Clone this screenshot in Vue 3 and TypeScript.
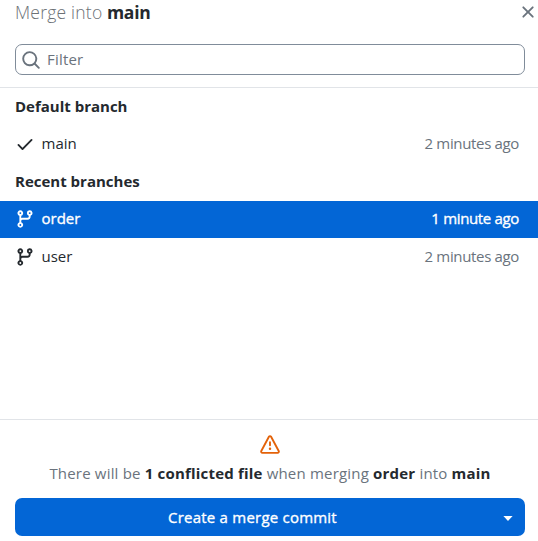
<script setup lang="ts">
import { ref } from 'vue'

interface Branch {
  name: string
  time: string
  current: boolean
}
interface BranchGroup {
  label: string
  branches: Branch[]
}

const filter = ref('')
const selected = ref('order')
const groups: BranchGroup[] = [
  { label: 'Default branch', branches: [{ name: 'main', time: '2 minutes ago', current: true }] },
  {
    label: 'Recent branches',
    branches: [
      { name: 'order', time: '1 minute ago', current: false },
      { name: 'user', time: '2 minutes ago', current: false },
    ],
  },
]

const checkPath =
  'M13.78 4.22a.75.75 0 0 1 0 1.06l-7.25 7.25a.75.75 0 0 1-1.06 0L2.22 9.28a.751.751 0 0 1 .018-1.042.751.751 0 0 1 1.042-.018L6 10.94l6.72-6.72a.75.75 0 0 1 1.06 0Z'
const branchPath =
  'M9.5 3.25a2.25 2.25 0 1 1 3 2.122V6A2.5 2.5 0 0 1 10 8.5H6a1 1 0 0 0-1 1v1.128a2.251 2.251 0 1 1-1.5 0V5.372a2.25 2.25 0 1 1 1.5 0v1.836A2.493 2.493 0 0 1 6 7h4a1 1 0 0 0 1-1v-.628A2.25 2.25 0 0 1 9.5 3.25Zm-6 0a.75.75 0 1 0 1.5 0 .75.75 0 0 0-1.5 0Zm8.25-.75a.75.75 0 1 0 0 1.5.75.75 0 0 0 0-1.5ZM4.25 12a.75.75 0 1 0 0 1.5.75.75 0 0 0 0-1.5Z'
</script>

<template>
  <div class="dialog">
    <header class="head">
      <h1 class="title"><span class="title-light">Merge into</span> <strong>main</strong></h1>
      <button class="close" aria-label="Close">
        <svg class="icon" viewBox="0 0 16 16">
          <path d="M3.72 3.72a.75.75 0 0 1 1.06 0L8 6.94l3.22-3.22a.749.749 0 0 1 1.275.326.749.749 0 0 1-.215.734L9.06 8l3.22 3.22a.749.749 0 0 1-.326 1.275.749.749 0 0 1-.734-.215L8 9.06l-3.22 3.22a.751.751 0 0 1-1.042-.018.751.751 0 0 1-.018-1.042L6.94 8 3.72 4.78a.75.75 0 0 1 0-1.06Z" />
        </svg>
      </button>
    </header>

    <div class="filter-bar">
      <label class="filter">
        <svg class="icon" viewBox="0 0 16 16">
          <path d="M10.68 11.74a6 6 0 0 1-7.922-8.982 6 6 0 0 1 8.982 7.922l3.04 3.04a.749.749 0 0 1-.326 1.275.749.749 0 0 1-.734-.215ZM11.5 7a4.499 4.499 0 1 0-8.997 0A4.499 4.499 0 0 0 11.5 7Z" />
        </svg>
        <input v-model="filter" type="text" placeholder="Filter" />
      </label>
    </div>

    <main class="list">
      <section v-for="group in groups" :key="group.label">
        <h2 class="group">{{ group.label }}</h2>
        <div
          v-for="branch in group.branches"
          :key="branch.name"
          class="row"
          :class="{ selected: branch.name === selected }"
          @click="selected = branch.name"
        >
          <svg class="icon" viewBox="0 0 16 16">
            <path :d="branch.current ? checkPath : branchPath" />
          </svg>
          <span class="name">{{ branch.name }}</span>
          <span class="time">{{ branch.time }}</span>
        </div>
      </section>
    </main>

    <footer class="foot">
      <svg class="icon warn" viewBox="0 0 16 16">
        <path d="M6.457 1.047c.659-1.234 2.427-1.234 3.086 0l6.082 11.378A1.75 1.75 0 0 1 14.082 15H1.918a1.75 1.75 0 0 1-1.543-2.575Zm1.763.707a.25.25 0 0 0-.44 0L1.698 13.132a.25.25 0 0 0 .22.368h12.164a.25.25 0 0 0 .22-.368Zm.53 3.996v2.5a.75.75 0 0 1-1.5 0v-2.5a.75.75 0 0 1 1.5 0ZM9 11a1 1 0 1 1-2 0 1 1 0 0 1 2 0Z" />
      </svg>
      <p class="message">
        There will be <strong>1 conflicted file</strong> when merging <strong>order</strong> into <strong>main</strong>
      </p>
      <div class="actions">
        <button class="merge">Create a merge commit</button>
        <button class="more" aria-label="Merge options">
          <svg class="caret" viewBox="0 0 10 5"><path d="M0.4 0h9.2L5 5Z" /></svg>
        </button>
      </div>
    </footer>
  </div>
</template>

<style>
body {
  margin: 0;
  background: #fff;
}
</style>

<style scoped>
.dialog {
  display: flex;
  flex-direction: column;
  box-sizing: border-box;
  width: 538px;
  height: 541px;
  padding-bottom: 5px;
  overflow: hidden;
  background: #fff;
  color: #24292e;
  font-family: 'Open Sans', 'Noto Sans', sans-serif;
  font-size: 15px;
  line-height: 20px;
}
button {
  padding: 0;
  border: 0;
  background: none;
  color: inherit;
  font: inherit;
}
.icon {
  display: block;
  flex: none;
  width: 20px;
  height: 20px;
  fill: currentColor;
}
.head {
  display: flex;
  justify-content: space-between;
  align-items: flex-start;
  height: 44px;
  padding-left: 15px;
}
.title {
  margin: 0;
  font-size: 17.5px;
  line-height: 24px;
  font-weight: 300;
}
.title-light {
  color: #6c7176;
  letter-spacing: 0.22px;
}
.title strong {
  font-weight: 700;
  letter-spacing: -0.25px;
}
.close {
  margin: 2px 0 0;
  color: #6a737d;
}
.filter-bar {
  height: 43px;
  padding: 0 13px 0 15px;
  border-bottom: 1px solid #e1e4e8;
}
.filter {
  display: flex;
  align-items: center;
  gap: 6px;
  box-sizing: border-box;
  height: 31px;
  padding: 0 5px;
  border: 1px solid #808c9a;
  border-radius: 7px;
  color: #6a737d;
}
.filter input {
  flex: 1;
  min-width: 0;
  padding: 0 0 2px;
  border: 0;
  outline: 0;
  background: none;
  color: #24292e;
  font: inherit;
  letter-spacing: 0.2px;
}
.filter input::placeholder {
  color: #6a737d;
  opacity: 1;
}
.list {
  flex: 1;
}
.group {
  margin: 0;
  padding: 0 15px;
  font-size: 15px;
  font-weight: 700;
  line-height: 37.5px;
}
.row {
  display: flex;
  align-items: center;
  height: 37.5px;
  padding: 0 19px 0 15px;
}
.name {
  flex: 1;
  margin-left: 6.5px;
  padding-bottom: 2px;
}
.time {
  padding-bottom: 2px;
  color: #6a737d;
  letter-spacing: -0.34px;
}
.row.selected {
  background: #0366d6;
  color: #fff;
}
.row.selected .name,
.row.selected .time {
  color: #fff;
  -webkit-text-stroke: 0.35px #fff;
}
.foot {
  display: flex;
  flex-direction: column;
  align-items: center;
  box-sizing: border-box;
  height: 117px;
  padding: 15px 13px 0 15px;
  border-top: 1px solid #e1e4e8;
}
.warn {
  color: #e36209;
}
.message {
  margin: 8px 0 15px;
  color: #6a737d;
  letter-spacing: 0.19px;
  white-space: nowrap;
}
.message strong {
  color: #24292e;
  font-weight: 700;
}
.actions {
  display: flex;
  align-self: stretch;
  height: 38px;
  border-radius: 7px;
  background: #0366d6;
  color: #fff;
}
.merge {
  flex: 1;
  padding-bottom: 1px;
  letter-spacing: 0.22px;
  -webkit-text-stroke: 0.35px #fff;
}
.more {
  display: flex;
  align-items: center;
  justify-content: center;
  width: 35px;
  padding-top: 3px;
}
.caret {
  width: 10px;
  height: 5px;
  fill: #fff;
}
</style>
